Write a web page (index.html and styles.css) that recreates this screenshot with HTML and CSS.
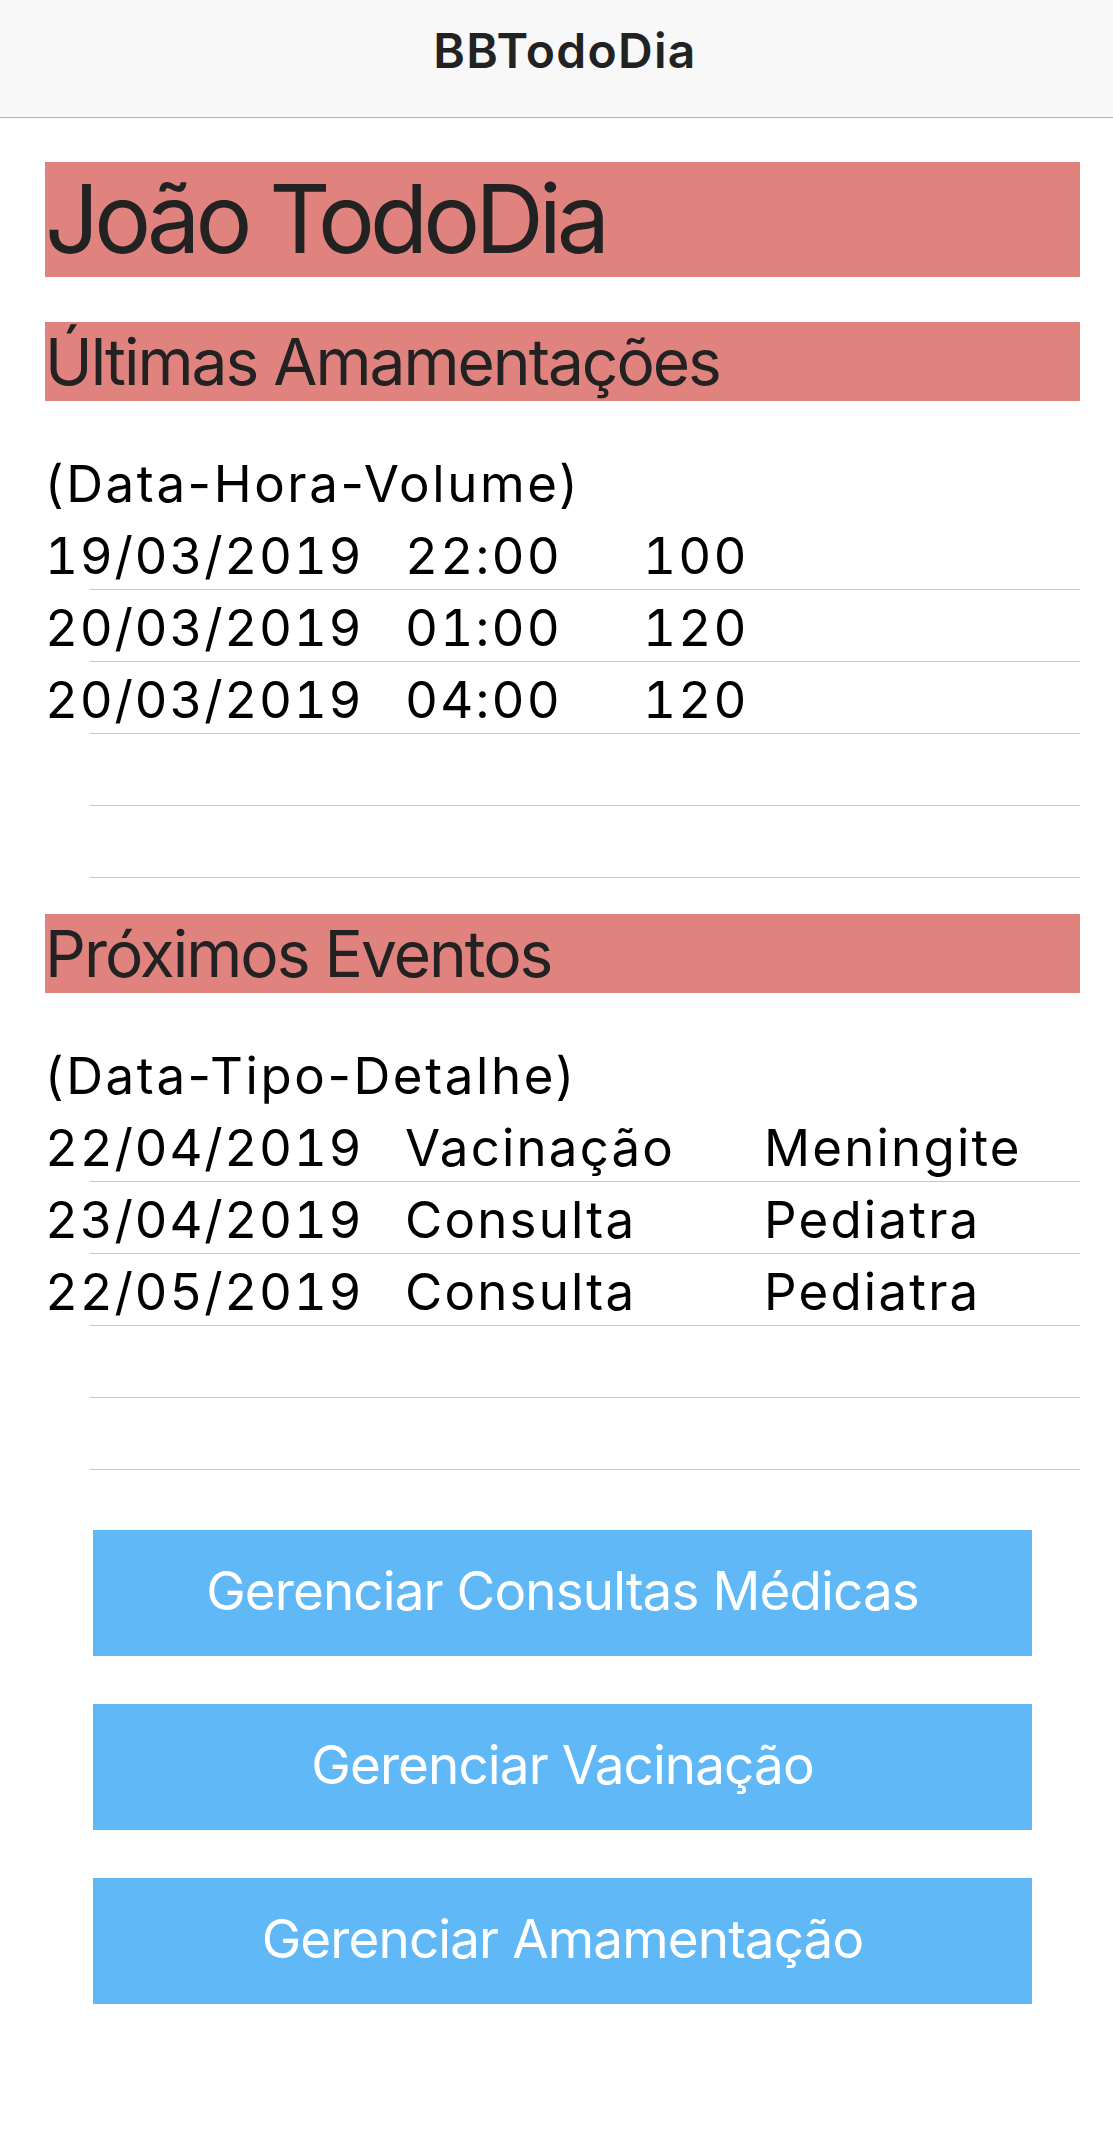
FILE: index.html
```html
<!DOCTYPE html>
<html lang="pt-BR">
<head>
<meta charset="utf-8">
<title>BBTodoDia</title>
<link rel="stylesheet" href="styles.css">
</head>
<body>
<header class="navbar">
  <h1 class="nav-title">BBTodoDia</h1>
</header>
<main class="content">
  <div class="name-bar">João TodoDia</div>

  <div class="section-bar">Últimas Amamentações</div>
  <div class="table table-feed">
    <div class="row header"><span>(Data-Hora-Volume)</span></div>
    <div class="row"><span class="date">19/03/2019</span><span>22:00</span><span>100</span></div>
    <div class="row"><span class="date">20/03/2019</span><span>01:00</span><span>120</span></div>
    <div class="row"><span class="date">20/03/2019</span><span>04:00</span><span>120</span></div>
    <div class="row"></div>
    <div class="row"></div>
  </div>

  <div class="section-bar section-events">Próximos Eventos</div>
  <div class="table table-events">
    <div class="row header"><span>(Data-Tipo-Detalhe)</span></div>
    <div class="row"><span class="date">22/04/2019</span><span>Vacinação</span><span>Meningite</span></div>
    <div class="row"><span class="date">23/04/2019</span><span>Consulta</span><span>Pediatra</span></div>
    <div class="row"><span class="date">22/05/2019</span><span>Consulta</span><span>Pediatra</span></div>
    <div class="row"></div>
    <div class="row"></div>
  </div>

  <div class="actions">
    <button class="action-btn">Gerenciar Consultas Médicas</button>
    <button class="action-btn">Gerenciar Vacinação</button>
    <button class="action-btn">Gerenciar Amamentação</button>
  </div>
</main>
</body>
</html>
```

FILE: styles.css
```css
* {
  box-sizing: border-box;
}

html, body {
  margin: 0;
  padding: 0;
  background: #ffffff;
}

body {
  width: 1113px;
  min-height: 2145px;
  font-family: "Inter", "Roboto", "Liberation Sans", sans-serif;
  color: #000000;
}

.navbar {
  height: 118px;
  padding: 22px 0 0 17px;
  background: #f8f8f8;
  border-bottom: 1px solid #b3b3b3;
}

.nav-title {
  margin: 0;
  text-align: center;
  font-size: 48px;
  line-height: 58px;
  font-weight: 600;
  color: #222222;
  letter-spacing: 1.3px;
}

.content {
  padding: 44px 33px 0 45px;
}

.name-bar {
  height: 115px;
  line-height: 114px;
  background: #e0837f;
  color: #222222;
  font-size: 95px;
  letter-spacing: -5px;
  white-space: nowrap;
}

.section-bar {
  margin-top: 45px;
  height: 79px;
  line-height: 79px;
  background: #e0837f;
  color: #222222;
  font-size: 64px;
  letter-spacing: -2px;
  white-space: nowrap;
}

.section-events {
  margin-top: 36px;
}

.table {
  margin-top: 45px;
}

.row {
  display: grid;
  height: 72px;
  padding-top: 5px;
  line-height: 66px;
  font-size: 51px;
  letter-spacing: 2.2px;
  font-variant-numeric: tabular-nums;
  color: #000000;
  white-space: nowrap;
  background: linear-gradient(#c8c7cc, #c8c7cc) no-repeat 45px 100% / calc(100% - 45px) 1px;
}

.row .date {
  letter-spacing: 1.7px;
}

.table-feed .row {
  grid-template-columns: 360px 238px 1fr;
}

.table-events .row {
  grid-template-columns: 360px 359px 1fr;
}

.row.header {
  background: none;
  grid-template-columns: 1fr;
  font-variant-numeric: normal;
  letter-spacing: 2.6px;
}

.actions {
  margin-top: 60px;
  padding: 0 48px;
  display: flex;
  flex-direction: column;
  gap: 48px;
}

.action-btn {
  display: block;
  width: 100%;
  height: 126px;
  padding: 0 0 3px 0;
  border: none;
  border-radius: 0;
  background: #61b8f7;
  color: #ffffff;
  font-family: "Inter", "Roboto", "Liberation Sans", sans-serif;
  font-size: 53px;
  line-height: 123px;
  letter-spacing: -0.9px;
  text-align: center;
}
```
